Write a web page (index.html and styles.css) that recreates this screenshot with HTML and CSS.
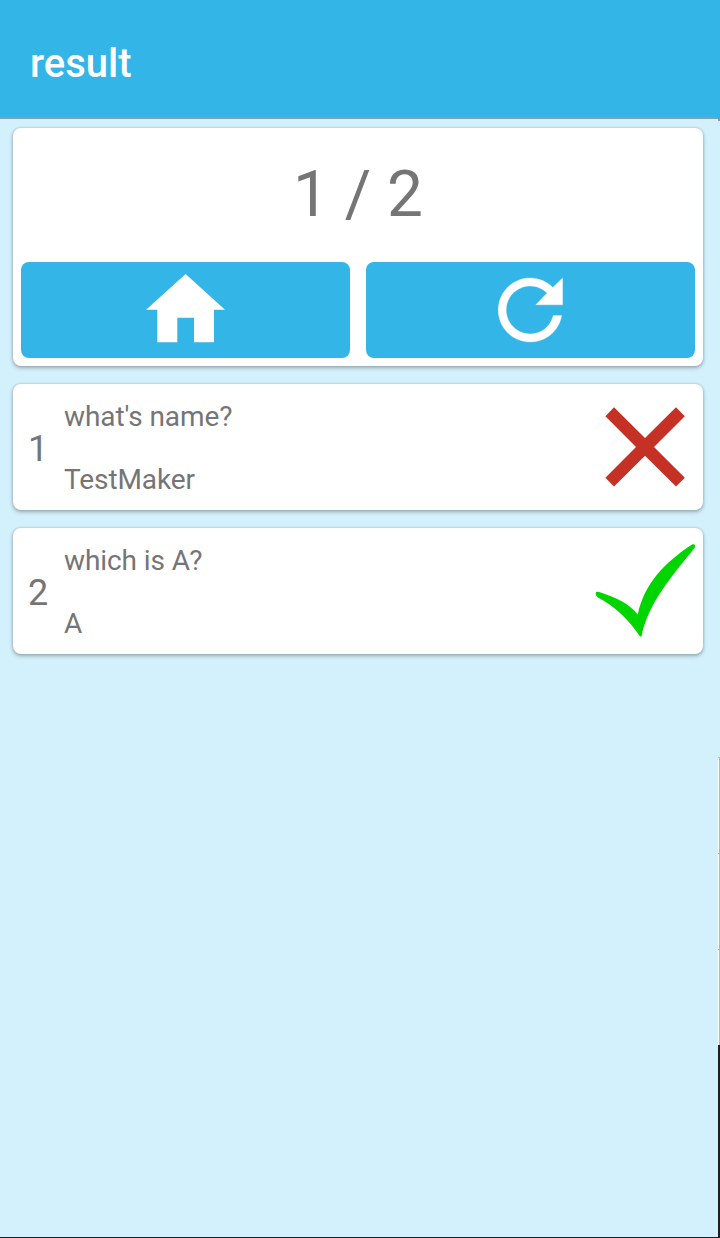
FILE: index.html
```html
<!DOCTYPE html>
<html lang="en">
<head>
<meta charset="utf-8">
<title>result</title>
<link rel="stylesheet" href="styles.css">
</head>
<body>
<div class="screen">
  <header class="bar"><h1 class="title">result</h1></header>
  <main class="content">
    <section class="card summary">
      <p class="score">1 / 2</p>
      <div class="actions">
        <button class="action" aria-label="Home">
          <svg width="96" height="96" viewBox="0 0 96 96" fill="#fff"><path d="M47.600 12 87 47.800H76V80.200H56V55.700H39.300V80.200H19.300V47.800H8.100Z"/></svg>
        </button>
        <button class="action" aria-label="Retry">
          <svg width="96" height="96" viewBox="0.2 0 24 24" fill="#fff" stroke="#fff" stroke-width=".08"><path d="M17.650 6.350C16.200 4.900 14.210 4 12 4c-4.420 0-7.990 3.580-7.990 8s3.570 8 7.990 8c3.930 0 7.240-2.750 7.850-6.600h-2.080c-.65 2.650-2.900 4.600-5.770 4.600-3.310 0-6-2.690-6-6s2.690-6 6-6c1.660 0 3.140.69 4.220 1.780L13.400 10.700h6.700V4l-2.450 2.350z"/></svg>
        </button>
      </div>
    </section>
    <article class="card item">
      <span class="number">1</span>
      <div class="texts"><p class="line">what's name?</p><p class="line">TestMaker</p></div>
      <svg class="mark" width="100" height="100" viewBox="0 0 100 100"><path d="M19 10.300 50 41 81 10.300 89.800 19.200 59 50 89.800 80.700 81 89.500 50 58.800 19 89.500 10.400 80.700 41 50 10.400 19.200Z" fill="#c53124"/></svg>
    </article>
    <article class="card item">
      <span class="number">2</span>
      <div class="texts"><p class="line">which is A?</p><p class="line">A</p></div>
      <svg class="mark" width="100" height="100" viewBox="0 0 100 100"><path d="M1 51.300Q2 50.300 5 51.200C20 56.500 34 62 42.800 73.500C49 43 70 21 97.500 3.300Q100.700 2.500 99.900 6.500C78 34 53 62 46.500 95.500L45 95.500C34 79 21 66 3 56.500Q0 54 1 51.300Z" fill="#00d500"/></svg>
    </article>
  </main>
  <div class="edge">
    <div class="edge-bar"></div>
    <div class="edge-gap"></div>
    <div class="edge-row"></div>
    <div class="edge-row"></div>
    <div class="edge-row"></div>
    <div class="edge-dark"></div>
  </div>
</div>
</body>
</html>
```
FILE: styles.css
```css
* { box-sizing: border-box; }
body { margin: 0; font-family: Roboto, sans-serif; color: #757575; }
h1, p { margin: 0; }
.screen {
  position: relative;
  height: 1238px;
  overflow: hidden;
  background: #d3f1fc;
  border-bottom: 1px solid #1c2022;
}
.bar {
  height: 119px;
  padding: 40px 30px 0;
  background: #33b5e7;
  border-bottom: 2px solid #8e9ba2;
}
.title { font-size: 40px; line-height: 47px; font-weight: 500; color: #fff; }
.content {
  display: flex;
  flex-direction: column;
  gap: 18px;
  padding: 9px 17px 0 13px;
}
.card {
  background: #fff;
  border-radius: 8px;
  box-shadow: 0 2px 4px rgba(0, 0, 0, .27), 0 0 3px rgba(0, 0, 0, .18);
}
.summary { height: 238px; padding: 8px; }
.score { height: 126px; padding-top: 21px; font-size: 64px; line-height: 75px; text-align: center; }
.actions { display: flex; gap: 16px; }
.action {
  flex: 1;
  display: flex;
  justify-content: center;
  height: 96px;
  padding: 0;
  border: 0;
  border-radius: 8px;
  background: #33b5e7;
}
.item { display: flex; height: 126px; padding: 0 8px 0 15px; }
.number { width: 36px; padding-top: 44px; font-size: 36px; line-height: 42px; }
.texts { flex: 1; display: flex; flex-direction: column; gap: 30px; padding-top: 16px; }
.line { font-size: 28px; line-height: 33px; letter-spacing: -.08px; }
.mark { margin-top: 13px; }
.edge { position: absolute; top: 0; right: 0; width: 2px; height: 1238px; display: flex; flex-direction: column; }
.edge-bar { height: 121px; background: #33b5e7; border-bottom: 2px solid #8e9ba2; }
.edge-gap { height: 636px; }
.edge-row { height: 96px; background: #fff; border-top: 1px solid #b5b5b5; border-right: 1px solid #b5b5b5; }
.edge-dark { flex: 1; background: #1c2022; }
```
